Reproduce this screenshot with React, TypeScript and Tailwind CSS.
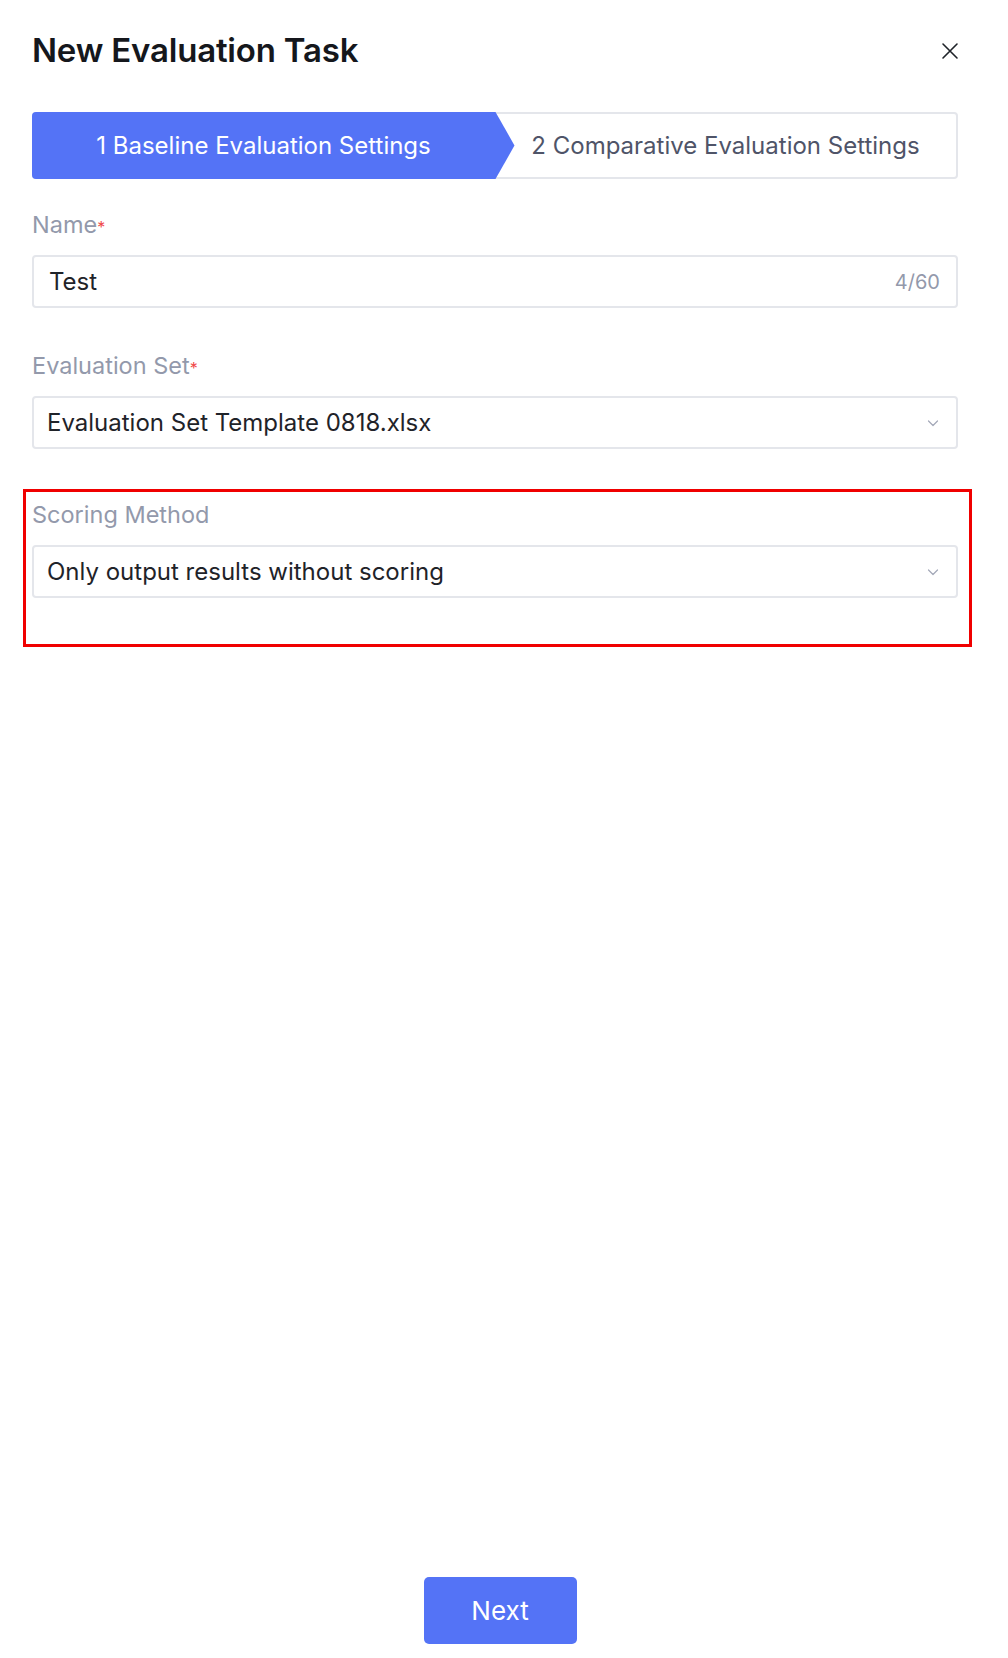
import React from 'react';

function Chevron() {
  return (
    <svg width="14" height="14" viewBox="0 0 14 14" fill="none" className="shrink-0">
      <path d="M2.5 5l4.5 4.5L11.5 5" stroke="#a3a8b8" strokeWidth="1.2" strokeLinecap="round" strokeLinejoin="round" />
    </svg>
  );
}

function CloseIcon() {
  return (
    <svg width="18" height="18" viewBox="0 0 18 18" fill="none">
      <path d="M2 2l14 14M16 2L2 16" stroke="#1f2329" strokeWidth="1.6" strokeLinecap="round" />
    </svg>
  );
}

function Label({ text, required }: { text: string; required?: boolean }) {
  return (
    <div className="text-[23.5px] leading-[30px] text-[#9399ab]">
      {text}
      {required && <span className="text-[#f04a4a] text-[16px] align-top relative top-[2px]">*</span>}
    </div>
  );
}

function SelectBox({ value }: { value: string }) {
  return (
    <div className="mt-[15px] h-[53px] border-2 border-[#e4e6eb] rounded-[4px] flex items-center pl-[13px] pr-[16px]">
      <span className="flex-1 text-[24px] text-[#1f2329]">{value}</span>
      <Chevron />
    </div>
  );
}

export default function App() {
  return (
    <div
      className="min-h-[1658px] bg-white flex flex-col px-[32px] w-[1008px]"
      style={{ fontFamily: 'Inter, "Noto Sans", sans-serif' }}
    >
      {/* Header */}
      <div className="flex items-center justify-between pt-[30px] w-[926px]">
        <h1 className="text-[33px] leading-[40px] font-semibold text-[#15171c] tracking-[-0.2px]">
          New Evaluation Task
        </h1>
        <div className="mr-[-1px] mt-[2px]">
          <CloseIcon />
        </div>
      </div>

      {/* Steps */}
      <div className="mt-[42px] w-[926px] h-[67px] border-2 border-[#e4e6eb] rounded-[4px] flex relative overflow-visible">
        <div className="relative w-[463px] -ml-[2px] -my-[2px] bg-[#5473f6] rounded-l-[4px] flex items-center justify-center">
          <span className="text-[24px] text-white">1 Baseline Evaluation Settings</span>
          <svg className="absolute left-full top-0" width="20" height="67" viewBox="0 0 20 67" preserveAspectRatio="none">
            <polygon points="0,0 0.5,0 19.5,33.5 0.5,67 0,67" fill="#5473f6" />
          </svg>
        </div>
        <div className="flex-1 flex items-center justify-center">
          <span className="text-[24px] text-[#4f5468]">2 Comparative Evaluation Settings</span>
        </div>
      </div>

      {/* Name */}
      <div className="mt-[31px] w-[926px]">
        <Label text="Name" required />
        <div className="mt-[15px] h-[53px] border-2 border-[#e4e6eb] rounded-[4px] flex items-center pl-[15px] pr-[16px]">
          <span className="flex-1 text-[24px] text-[#1f2329]">Test</span>
          <span className="text-[20px] text-[#9399ab]">4/60</span>
        </div>
      </div>

      {/* Evaluation set */}
      <div className="mt-[43px] w-[926px]">
        <Label text="Evaluation Set" required />
        <SelectBox value="Evaluation Set Template 0818.xlsx" />
      </div>

      {/* Scoring method (highlighted) */}
      <div className="mt-[40px] -ml-[9px] w-[949px] border-[3px] border-[#f00000] pl-[6px] pr-[11px] pt-[8px] pb-[46px]">
        <Label text="Scoring Method" />
        <SelectBox value="Only output results without scoring" />
      </div>

      <div className="flex-1" />

      {/* Footer */}
      <div className="flex justify-center w-[926px] pl-[10px] mb-[14px]">
        <button className="w-[153px] h-[67px] rounded-[5px] bg-[#5473f6] text-white text-[26px]">
          Next
        </button>
      </div>
    </div>
  );
}
